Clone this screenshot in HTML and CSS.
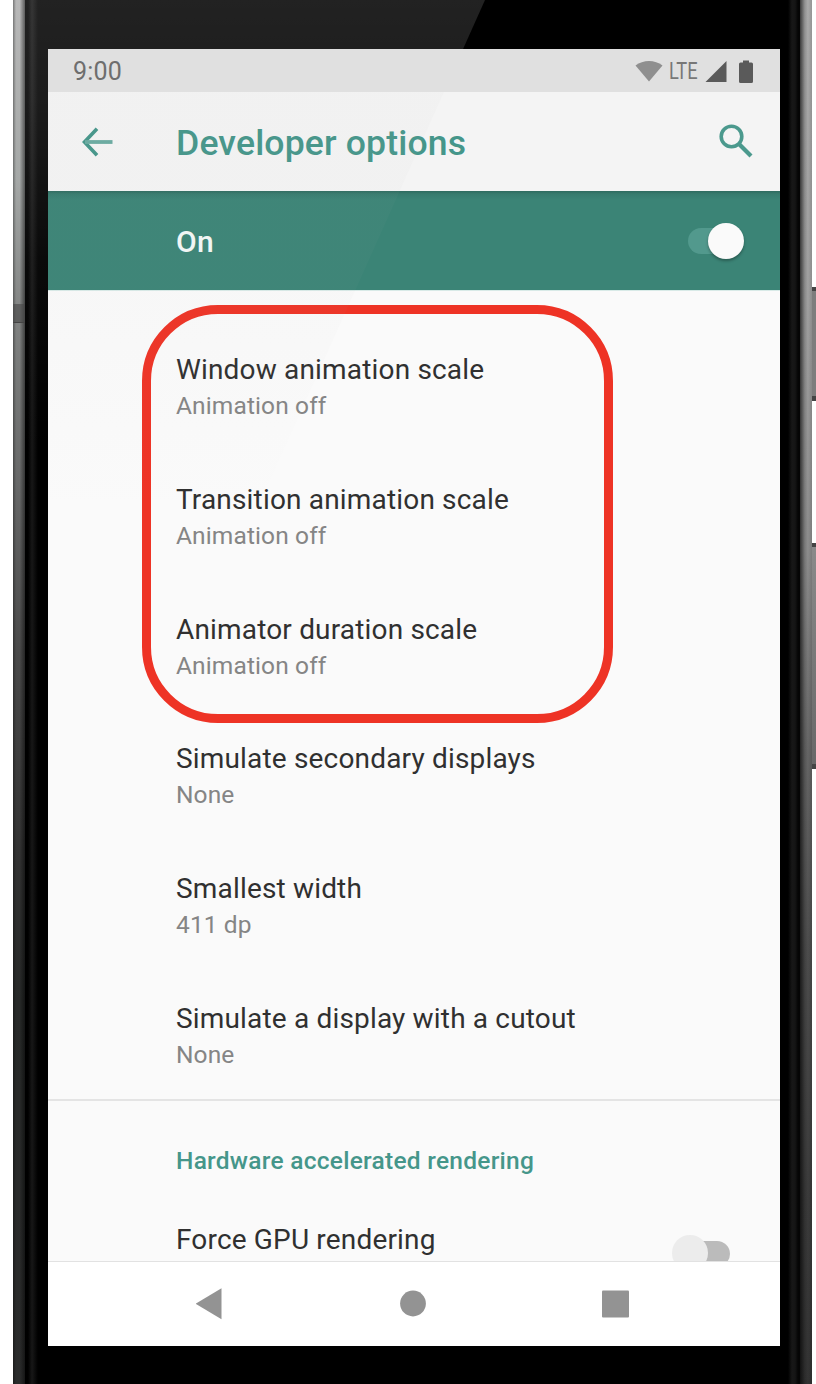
FILE: index.html
```
<!DOCTYPE html>
<html lang="en">
<head>
<meta charset="utf-8">
<title>Developer options</title>
<link rel="stylesheet" href="styles.css">
</head>
<body>
<div class="phone">
  <div class="rail rail-left"><span class="seam"></span></div>
  <div class="body">
    <div class="glare"></div>
    <div class="screen">
      <div class="status">
        <span class="clock">9:00</span>
        <span class="spacer"></span>
        <svg class="wifi" width="28" height="22" viewBox="0 0 28 22"><path d="M0.500 5.500C8 -0.500 20 -0.500 27.500 5.500L14 21.500Z" fill="#8f8f8f"/></svg>
        <span class="lte">LTE</span>
        <svg class="signal" width="22" height="21" viewBox="0 0 22 21"><path d="M0.500 21L21.500 0V21Z" fill="#5a5a5a"/></svg>
        <svg class="battery" width="14" height="23" viewBox="0 0 14 23"><path d="M4 0.500H10V2.500H12.500Q14 2.500 14 4V21.500Q14 23 12.500 23H1.500Q0 23 0 21.500V4Q0 2.500 1.500 2.500H4Z" fill="#5a5a5a"/></svg>
      </div>
      <header class="appbar">
        <svg class="back" width="32" height="30" viewBox="0 0 32 30" fill="none" stroke="#45968a"><path d="M15 1.800L2.500 15L15 28.200" stroke-width="3.600"/><path d="M3 15H30.500" stroke-width="3.800" stroke="#6aaba1"/></svg>
        <h1>Developer options</h1>
        <svg class="search" width="34" height="34" viewBox="0 0 34 34" fill="none" stroke="#4b998d"><circle cx="12.500" cy="12.500" r="10.300" stroke-width="3.600"/><path d="M19.500 19.500L32 32" stroke-width="4.300"/></svg>
      </header>
      <div class="master">
        <span class="master-label">On</span>
        <span class="switch on"><i class="track"></i><i class="thumb"></i></span>
      </div>
      <main class="list">
        <div class="row"><div class="title">Window animation scale</div><div class="sub">Animation off</div></div>
        <div class="row"><div class="title">Transition animation scale</div><div class="sub">Animation off</div></div>
        <div class="row"><div class="title">Animator duration scale</div><div class="sub">Animation off</div></div>
        <div class="row"><div class="title">Simulate secondary displays</div><div class="sub">None</div></div>
        <div class="row"><div class="title">Smallest width</div><div class="sub">411 dp</div></div>
        <div class="row"><div class="title">Simulate a display with a cutout</div><div class="sub">None</div></div>
        <h2>Hardware accelerated rendering</h2>
        <div class="last">
          <div class="title">Force GPU rendering</div>
          <span class="switch off"><i class="track"></i><i class="thumb"></i></span>
        </div>
        <div class="highlight"></div>
      </main>
      <nav class="nav">
        <svg width="27" height="38" viewBox="0 0 27 38"><path d="M-0.500 18.800L25.500 3.300V34.300Z" fill="#939393"/></svg>
        <svg width="27" height="38" viewBox="0 0 27 38"><circle cx="14" cy="18.500" r="12.900" fill="#939393"/></svg>
        <svg width="27" height="38" viewBox="0 0 27 38"><rect x="0" y="5.500" width="27" height="27" rx="1" fill="#939393"/></svg>
      </nav>
      <div class="screen-glare"></div>
    </div>
  </div>
  <div class="rail rail-right"></div>
  <div class="keys"><span class="key power"></span><span class="key volume"></span></div>
</div>
</body>
</html>
```
FILE: styles.css
```
* { box-sizing: border-box; }
body {
  margin: 0;
  background: #fff;
  font-family: Roboto, "Liberation Sans", sans-serif;
}
.phone {
  display: flex;
  width: 816px;
  height: 1384px;
  padding-left: 13px;
  overflow: hidden;
}
.rail { flex: none; }
.rail-left {
  width: 12px;
  padding-top: 304px;
  background:
    linear-gradient(90deg, rgba(0,0,0,.35), rgba(0,0,0,0) 25%, rgba(0,0,0,0) 55%, rgba(0,0,0,.5)),
    linear-gradient(#b8b8b8, #a5a8a7 180px, #808281 320px, #686969 480px, #4a4a4a 650px, #333 850px, #272928 1000px, #2b2c2c);
}
.seam {
  display: block;
  height: 19px;
  background: rgba(70,70,70,.6);
  border-bottom: 1px solid #444;
}
.rail-right {
  width: 12px;
  background:
    linear-gradient(90deg, rgba(0,0,0,.65), rgba(0,0,0,.15) 40%, rgba(0,0,0,0) 65%, rgba(0,0,0,.12)),
    linear-gradient(#aaa, #a0a0a0 300px, #8d8d8d 550px, #666 750px, #4d4d4d 950px, #3b3b3b 1200px, #333);
}
.body {
  position: relative;
  width: 775px;
  flex: none;
  padding: 49px 20px 38px 23px;
  background: linear-gradient(90deg, #000 3px, #171717 7px, #000 13px, #000 763px, #171717 767px, #151515 770px, #050505 773px);
}
/* diagonal light reflection across the glass */
.glare {
  position: absolute;
  inset: 0;
  background: linear-gradient(rgba(255,255,255,.135), rgba(255,255,255,.11) 100px, rgba(255,255,255,.04) 260px, rgba(255,255,255,0) 450px);
  clip-path: polygon(0 0, 460px 0, 236px 500px, 0 500px);
}
.screen {
  position: relative;
  display: flex;
  flex-direction: column;
  width: 732px;
  height: 1297px;
  overflow: hidden;
  background: #fafafa;
}
.screen-glare {
  position: absolute;
  inset: 43px 0 0 0;
  background: linear-gradient(rgba(175,175,175,.04), rgba(175,175,175,.035) 200px, rgba(175,175,175,0) 420px);
  clip-path: polygon(0 0, 396px 0, 208px 420px, 0 420px);
}
.status {
  display: flex;
  align-items: center;
  height: 43px;
  flex: none;
  padding: 1px 27px 0 25px;
  background: #e0e0e0;
  color: #6e6e6e;
}
.clock { font-size: 25px; letter-spacing: .2px; }
.spacer { flex: 1; }
.wifi { margin-right: 6px; }
.lte {
  width: 32px;
  margin-right: 4px;
  font-size: 24px;
  color: #777;
  white-space: nowrap;
  transform: scaleX(.76);
  transform-origin: 0 50%;
}
.signal { margin-right: 12px; }
.appbar {
  display: flex;
  align-items: center;
  height: 99px;
  flex: none;
  padding: 2px 27px 0 34px;
  background: #f4f4f4;
}
h1 {
  flex: 1;
  margin: 0 0 0 62px;
  font-size: 35.600px;
  line-height: 44px;
  font-weight: 500;
  letter-spacing: .15px;
  color: #45968a;
}
.search { margin-top: -4px; }
.back { margin-top: -2px; }
.master {
  display: flex;
  align-items: center;
  justify-content: space-between;
  height: 99px;
  flex: none;
  padding: 2px 35px 0 128px;
  background: linear-gradient(#2f6a5f, #377b6e 3px, #3b8476 9px);
  color: #f3f8f7;
}
.master-label { font-size: 30px; font-weight: 500; letter-spacing: .3px; }
.switch { position: relative; display: block; }
.switch i { position: absolute; display: block; }
.on { width: 58px; height: 37px; }
.on .track { left: 1px; top: 5px; width: 50px; height: 26px; border-radius: 13px; background: #52998d; }
.on .thumb { right: 1px; top: 0; width: 36px; height: 36px; border-radius: 50%; background: #fafafa; box-shadow: 0 2px 3px rgba(0,0,0,.3); }
.list {
  position: relative;
  height: 972px;
  flex: none;
  overflow: hidden;
  padding-top: 31px;
  border-top: 1px solid #d8eae7;
}
.row { height: 129.800px; padding: 29px 0 0 128px; }
.row:nth-child(6) { height: 130px; border-bottom: 2px solid #e4e4e4; }
.title { font-size: 28px; line-height: 37px; color: #303030; white-space: nowrap; letter-spacing: .17px; }
.sub { font-size: 24.500px; line-height: 35px; color: #858585; letter-spacing: .12px; }
h2 {
  margin: 43px 0 0 128px;
  font-size: 24.500px;
  line-height: 34px;
  font-weight: 500;
  letter-spacing: .26px;
  color: #45968a;
}
.last {
  display: flex;
  justify-content: space-between;
  padding: 43px 49px 0 128px;
}
.off { width: 59px; height: 37px; margin-top: 14px; }
.off .track { right: 1px; top: 6px; width: 50px; height: 26px; border-radius: 13px; background: #bbb; }
.off .thumb { left: 0; top: 0; width: 36px; height: 36px; border-radius: 50%; background: #ececec; }
.highlight {
  position: absolute;
  left: 94px;
  top: 14px;
  width: 471px;
  height: 418px;
  border: 9px solid #ee3325;
  border-radius: 76px;
}
.nav {
  display: flex;
  align-items: center;
  justify-content: space-between;
  height: 84px;
  flex: none;
  padding: 0 151px 0 148px;
  background: #fff;
  box-shadow: 0 -1px 0 #e2e2e2;
  position: relative;
}
.keys {
  width: 4px;
  flex: none;
  display: flex;
  flex-direction: column;
  padding-top: 287px;
}
.key {
  flex: none;
  border-top: 4px solid #444;
  border-bottom: 5px solid #444;
  background: #7d7d7d;
}
.power { height: 114px; }
.volume { height: 226px; margin-top: 142px; background: linear-gradient(#8a8a8a, #686868); }
```
